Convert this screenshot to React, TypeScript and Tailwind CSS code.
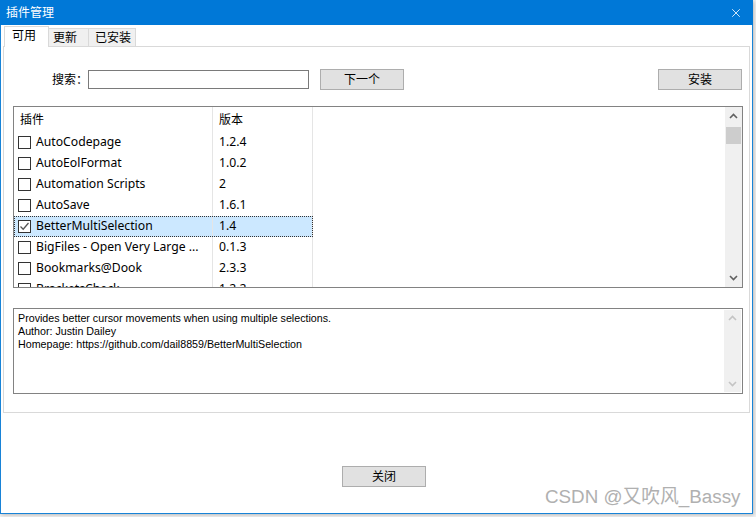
import { X } from 'lucide-react';

const PLUGINS = [
  { name: 'AutoCodepage', ver: '1.2.4' },
  { name: 'AutoEolFormat', ver: '1.0.2' },
  { name: 'Automation Scripts', ver: '2' },
  { name: 'AutoSave', ver: '1.6.1' },
  { name: 'BetterMultiSelection', ver: '1.4', checked: true, selected: true },
  { name: 'BigFiles - Open Very Large ...', ver: '0.1.3' },
  { name: 'Bookmarks@Dook', ver: '2.3.3' },
  { name: 'BracketsCheck', ver: '1.2.2' },
];

const ui = "font-['Noto_Sans','Noto_Sans_CJK_SC',sans-serif]";

function Chevron({ up, color }: { up?: boolean; color: string }) {
  return (
    <svg width="9" height="6" viewBox="0 0 9 6" className="block">
      <path d={up ? 'M1 5 L4.5 1.5 L8 5' : 'M1 1 L4.5 4.5 L8 1'} fill="none" stroke={color} strokeWidth="1.6" />
    </svg>
  );
}

function Button({ label }: { label: string }) {
  return (
    <button className="w-[84px] h-[21px] bg-[#e1e1e1] border border-[#adadad] text-[12px] leading-none text-black flex items-center justify-center">
      {label}
    </button>
  );
}

function Checkbox({ checked }: { checked?: boolean }) {
  return (
    <div className="w-[13px] h-[13px] border border-[#333] bg-white shrink-0 flex items-center justify-center">
      {checked && (
        <svg width="11" height="11" viewBox="0 0 11 11">
          <path d="M1.5 5.5 L4.2 8.2 L9.5 2" fill="none" stroke="#555" strokeWidth="1.3" />
        </svg>
      )}
    </div>
  );
}

export default function App() {
  return (
    <div className={`relative w-[756px] h-[517px] bg-[#f3f3f3] ${ui}`}>
      <div className="w-[753px] h-[514px] flex flex-col bg-white shadow-[1px_1px_4px_rgba(0,0,0,0.25)]">
        {/* title bar */}
        <div className="h-[25px] bg-[#0078d7] flex items-center justify-between pl-[6px] pr-[10px] shrink-0">
          <span className="text-white text-[12px] leading-none">插件管理</span>
          <X size={14} color="#fff" strokeWidth={1.4} />
        </div>

        <div className="flex-1 flex flex-col border-x border-b border-[#1883d7] bg-white">
          {/* tabs */}
          <div className="flex items-end h-[21px] pl-[3px]">
            <div className="h-[21px] w-[45px] bg-white border-x border-t border-[#d9d9d9] text-[12px] leading-none flex items-center pl-[7px] relative z-10 -mb-px pb-[2px]">可用</div>
            <div className="h-[18px] w-[40px] bg-[#f0f0f0] border-t border-r border-[#d9d9d9] text-[12px] leading-none flex items-center pl-[4px]">更新</div>
            <div className="h-[18px] w-[47px] bg-[#f0f0f0] border-t border-r border-[#d9d9d9] text-[12px] leading-none flex items-center pl-[6px]">已安装</div>
          </div>

          {/* tab panel */}
          <div className="ml-[2px] mr-[2px] border border-[#d9d9d9] bg-white flex flex-col pb-[18px]">
            {/* search row */}
            <div className="flex items-center h-[21px] mt-[22px]">
              <span className="ml-[48px] text-[12px] leading-none">搜索：</span>
              <div className="w-[221px] h-[19px] border border-[#7a7a7a] bg-white" />
              <div className="ml-[11px]"><Button label="下一个" /></div>
              <div className="ml-auto mr-[7px]"><Button label="安装" /></div>
            </div>

            {/* plugin list */}
            <div className="ml-[9px] mt-[16px] w-[730px] h-[182px] border border-[#828282] flex overflow-hidden">
              <div className="flex-1 flex flex-col">
                <div className="flex h-[25px] shrink-0">
                  <div className="w-[199px] border-r border-[#e5e5e5] text-[12px] leading-none flex items-center pl-[6px]">插件</div>
                  <div className="w-[100px] border-r border-[#e5e5e5] text-[12px] leading-none flex items-center pl-[6px]">版本</div>
                </div>
                {PLUGINS.map((p) => (
                  <div key={p.name} className={`flex h-[21px] shrink-0 w-[299px] ${p.selected ? 'bg-[#cce8ff] outline outline-1 outline-dotted outline-[#333] -outline-offset-1' : ''}`}>
                    <div className="w-[199px] border-r border-[#e5e5e5] flex items-center pl-[4px] gap-[5px] text-[12.2px] leading-none whitespace-nowrap">
                      <Checkbox checked={p.checked} />
                      <span>{p.name}</span>
                    </div>
                    <div className="w-[100px] border-r border-[#e5e5e5] flex items-center pl-[6px] text-[12.2px] leading-none">{p.ver}</div>
                  </div>
                ))}
              </div>
              <div className="w-[17px] bg-[#f0f0f0] flex flex-col items-center shrink-0">
                <div className="h-[18px] flex items-center justify-center"><Chevron up color="#606060" /></div>
                <div className="w-[15px] h-[17px] bg-[#cdcdcd] mt-[2px]" />
                <div className="mt-auto h-[18px] flex items-center justify-center"><Chevron color="#606060" /></div>
              </div>
            </div>

            {/* description */}
            <div className="ml-[9px] mt-[20px] w-[730px] h-[86px] border border-[#828282] flex">
              <div className="flex-1 pl-[4px] pt-[3px] font-['Liberation_Sans',sans-serif] text-[10.7px] leading-[13px] text-black">
                <div>Provides better cursor movements when using multiple selections.</div>
                <div>Author: Justin Dailey</div>
                <div>Homepage: https://github.com/dail8859/BetterMultiSelection</div>
              </div>
              <div className="w-[17px] bg-[#f0f0f0] flex flex-col items-center justify-between py-[5px] my-px mr-px shrink-0">
                <Chevron up color="#c4c4c4" />
                <Chevron color="#c4c4c4" />
              </div>
            </div>
          </div>

          {/* bottom */}
          <div className="mt-[53px] ml-[341px]">
            <Button label="关闭" />
          </div>
        </div>
      </div>

      <div className="absolute left-[545px] top-[485px] text-[18.8px] leading-[24px] text-[#b0b0b0] font-['Liberation_Sans','Noto_Sans_CJK_SC',sans-serif] [text-shadow:0_0_2px_#fff]">
        CSDN @又吹风_Bassy
      </div>
    </div>
  );
}
